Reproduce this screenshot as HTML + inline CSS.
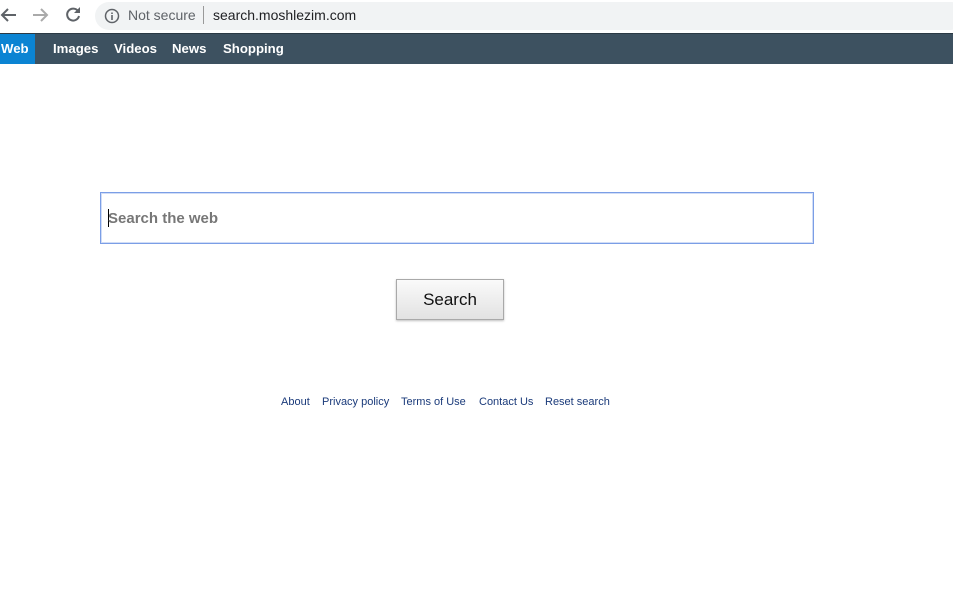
<!DOCTYPE html>
<html><head><style>
body{margin:0;width:953px;height:608px;background:#fff;font-family:"Liberation Sans",Arial,sans-serif;position:relative;overflow:hidden}
.chrome{position:absolute;top:0;left:0;width:953px;height:33px;background:#fff}
.omni{position:absolute;left:95px;top:2px;width:870px;height:28px;border-radius:14px;background:#f1f3f4}
.nav{position:absolute;top:33px;left:0;width:953px;height:31px;background:#3d5160;border-top:1px solid #2b3a45;box-sizing:border-box}
.nav span{position:absolute;top:7px;color:#fff;font-weight:bold;font-size:13.2px}
.web{position:absolute;left:0;top:0;width:35px;height:30px;background:#0b84d3}
.box{position:absolute;left:100px;top:192px;width:714px;height:52px;border:1px solid #7b9ee6;box-shadow:0 0 0 1px rgba(123,158,230,.35) inset;box-sizing:border-box}
.btn{position:absolute;left:396px;top:279px;width:108px;height:41px;border:1px solid #a9a9a9;box-sizing:border-box;background:linear-gradient(#fafafa,#e2e2e2);box-shadow:0 1px 2px rgba(0,0,0,.25);font-size:17px;text-align:center;line-height:39px;color:#111}
.links{position:absolute;top:396px;font-size:11px;color:#1a3a7a}
.links span{position:absolute;white-space:nowrap}
</style></head><body>
<div class="chrome">
<svg style="position:absolute;left:0;top:6px" width="90" height="20"><g fill="none" stroke-width="2"><path d="M16 9H2M8 3L2 9l6 6" stroke="#5f6368"/><path d="M33 9h14M41 3l6 6-6 6" stroke="#aaa"/><path d="M78 5a6 6 0 1 0 1 5" stroke="#5f6368"/></g><path d="M80 1v6h-6z" fill="#5f6368"/></svg>
<div class="omni"></div>
<svg style="position:absolute;left:104px;top:8px" width="16" height="16"><circle cx="8" cy="8" r="6.5" fill="none" stroke="#5f6368" stroke-width="1.5"/><path d="M8 7v5M8 4.5v1.5" stroke="#5f6368" stroke-width="1.6"/></svg>
<span style="position:absolute;left:128px;top:7px;font-size:14px;color:#5f6368">Not secure</span>
<div style="position:absolute;left:203px;top:6px;width:1px;height:18px;background:#999"></div>
<span style="position:absolute;left:213px;top:7px;font-size:14px;color:#202124">search.moshlezim.com</span>
</div>
<div class="nav"><div class="web"></div>
<span style="left:1px">Web</span><span style="left:53px">Images</span><span style="left:114px">Videos</span><span style="left:172px">News</span><span style="left:223px">Shopping</span></div>
<div class="box"><div style="position:absolute;left:7px;top:16px;width:1px;height:18px;background:#000"></div><span style="position:absolute;left:7px;top:17px;font-size:15px;font-weight:bold;color:#777">Search the web</span></div>
<div class="btn">Search</div>
<div class="links"><span style="left:281px">About</span><span style="left:322px">Privacy policy</span><span style="left:401px">Terms of Use</span><span style="left:479px">Contact Us</span><span style="left:545px">Reset search</span></div>
</body></html>
